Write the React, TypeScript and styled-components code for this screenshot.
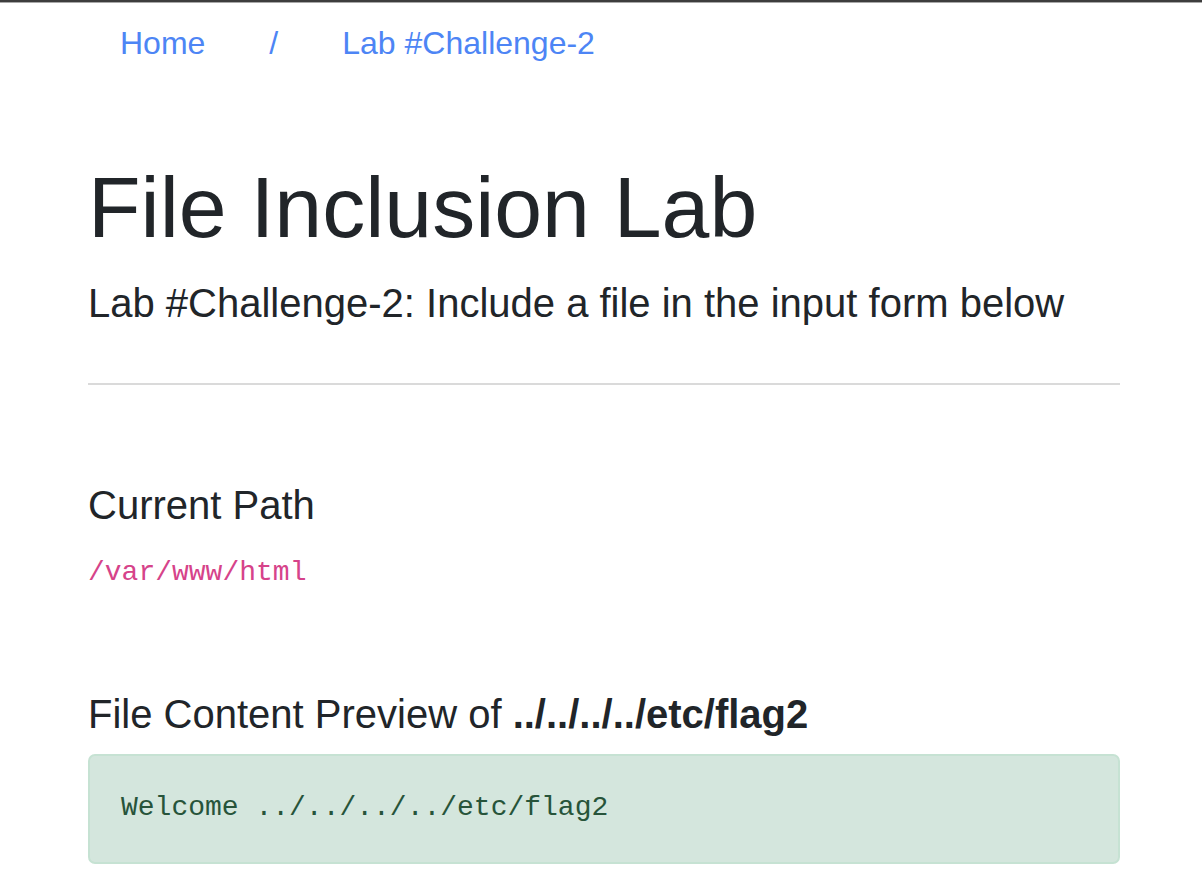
import React from "react";
import styled, { createGlobalStyle } from "styled-components";

const GlobalStyle = createGlobalStyle`
  html, body {
    margin: 0;
    padding: 0;
    background: #ffffff;
  }
  body {
    font-family: "Liberation Sans", Arial, sans-serif;
    color: #212529;
  }
`;

const TopEdge = styled.div`
  height: 2px;
  background: #3d3d3d;
  border-bottom: 1px solid #a8a8a8;
`;

const Container = styled.main`
  width: 1032px;
  margin-left: 88px;
  display: flex;
  flex-direction: column;
`;

const Breadcrumb = styled.nav`
  display: flex;
  align-items: baseline;
  gap: 64px;
  padding: 16px 0 0 32px;
  font-size: 32px;
  line-height: 48px;
`;

const Crumb = styled.a`
  color: #4d85f5;
  text-decoration: none;
`;

const Separator = styled.span`
  color: #4d85f5;
`;

const Title = styled.h1`
  margin: 89px 0 0;
  font-size: 86px;
  font-weight: 400;
  line-height: 103px;
`;

const Lead = styled.p`
  margin: 14px 0 0;
  font-size: 40px;
  line-height: 60px;
  font-weight: 400;
`;

const Divider = styled.hr`
  margin: 50px 0 0;
  border: 0;
  border-top: 2px solid #dadada;
  height: 0;
`;

const SectionTitle = styled.h4<{ $gap: number }>`
  margin: ${(p) => p.$gap}px 0 0;
  font-size: 40px;
  font-weight: 400;
  line-height: 48px;
`;

const PathCode = styled.code`
  display: block;
  margin-top: 23px;
  font-family: "Liberation Mono", "Courier New", monospace;
  font-size: 28px;
  line-height: 42px;
  color: #d6438a;
`;

const Preview = styled.div`
  margin-top: 16px;
  border: 2px solid #c6e2d3;
  border-radius: 7px;
  background: #d4e6dd;
  padding: 31px 31px 33px;
`;

const PreviewText = styled.pre`
  margin: 0;
  font-family: "Liberation Mono", "Courier New", monospace;
  font-size: 28px;
  line-height: 42px;
  color: #27543a;
`;

export default function App() {
  return (
    <>
      <GlobalStyle />
      <TopEdge />
      <Container>
        <Breadcrumb aria-label="breadcrumb">
          <Crumb href="#">Home</Crumb>
          <Separator>/</Separator>
          <Crumb href="#">Lab #Challenge-2</Crumb>
        </Breadcrumb>
        <Title>File Inclusion Lab</Title>
        <Lead>Lab #Challenge-2: Include a file in the input form below</Lead>
        <Divider />
        <SectionTitle $gap={96}>Current Path</SectionTitle>
        <PathCode>/var/www/html</PathCode>
        <SectionTitle $gap={96}>
          File Content Preview of <b>../../../../etc/flag2</b>
        </SectionTitle>
        <Preview>
          <PreviewText>Welcome ../../../../etc/flag2</PreviewText>
        </Preview>
      </Container>
    </>
  );
}
